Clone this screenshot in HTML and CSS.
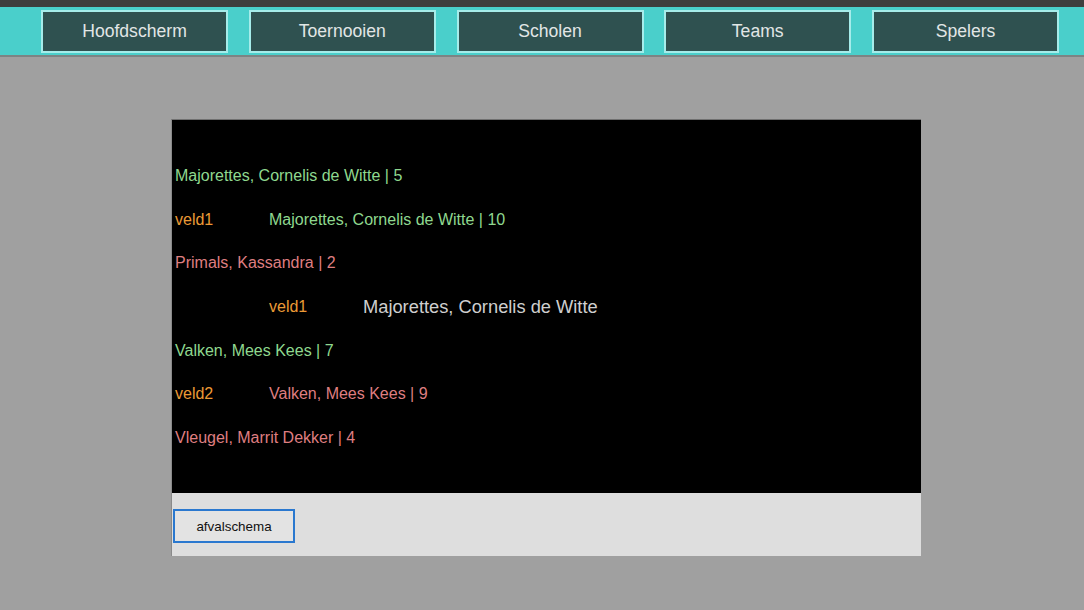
FILE: index.html
```html
<!DOCTYPE html>
<html>
<head>
<meta charset="utf-8">
<link rel="stylesheet" href="styles.css">
</head>
<body>
<header class="topbar">
  <div class="navbtn">Hoofdscherm</div>
  <div class="navbtn">Toernooien</div>
  <div class="navbtn">Scholen</div>
  <div class="navbtn">Teams</div>
  <div class="navbtn">Spelers</div>
</header>
<main class="content">
  <section class="panel">
    <div class="board">
      <div class="row"><span class="span green">Majorettes, Cornelis de Witte | 5</span></div>
      <div class="row"><span class="orange">veld1</span><span class="span2 green">Majorettes, Cornelis de Witte | 10</span></div>
      <div class="row"><span class="span red">Primals, Kassandra | 2</span></div>
      <div class="row"><span></span><span class="orange">veld1</span><span class="winner">Majorettes, Cornelis de Witte</span></div>
      <div class="row"><span class="span green">Valken, Mees Kees | 7</span></div>
      <div class="row"><span class="orange">veld2</span><span class="span2 red">Valken, Mees Kees | 9</span></div>
      <div class="row"><span class="span red">Vleugel, Marrit Dekker | 4</span></div>
    </div>
    <div class="footer">
      <button class="action">afvalschema</button>
    </div>
  </section>
</main>
</body>
</html>
```

FILE: styles.css
```css
html, body {
  margin: 0;
  padding: 0;
}
body {
  background: #a0a0a0;
  font-family: "Liberation Sans", Arial, sans-serif;
  height: 610px;
  overflow: hidden;
}
.topbar {
  border-top: 7px solid #3e3e3e;
  border-bottom: 2px solid #7c8484;
  background: #4acfcb;
  height: 57px;
  box-sizing: border-box;
  display: flex;
  align-items: center;
  gap: 20.75px;
  padding-left: 41px;
}
.navbtn {
  width: 187px;
  height: 43px;
  box-sizing: border-box;
  border: 2px solid #a6ecea;
  background: #2f5150;
  color: #e2e6e6;
  font-size: 17.6px;
  display: flex;
  align-items: center;
  justify-content: center;
  flex: none;
}
.content {
  padding-top: 62px;
  padding-left: 171px;
}
.panel {
  width: 749px;
  border-top: 1px solid #707070;
  border-left: 1px solid #8a8a8a;
}
.board {
  background: #000;
  height: 373px;
  box-sizing: border-box;
  padding: 34px 0 0 3px;
  font-size: 16px;
}
.row {
  display: grid;
  grid-template-columns: 94px 94px 1fr;
  height: 43.7px;
  align-items: center;
  white-space: nowrap;
}
.span {
  grid-column: 1 / -1;
}
.span2 {
  grid-column: 2 / -1;
}
.green { color: #8fd88f; }
.orange { color: #eb9a36; }
.red { color: #df7e80; }
.winner {
  color: #cfcfcf;
  font-size: 18.3px;
}
.footer {
  background: #dedede;
  height: 63px;
  box-sizing: border-box;
  padding: 16px 0 0 1px;
}
.action {
  width: 122px;
  height: 34px;
  box-sizing: border-box;
  border: 2px solid #2a78cf;
  background: #e3e3e3;
  color: #111;
  font-family: "Liberation Sans", Arial, sans-serif;
  font-size: 13.4px;
  padding: 0;
  border-radius: 0;
}
```
